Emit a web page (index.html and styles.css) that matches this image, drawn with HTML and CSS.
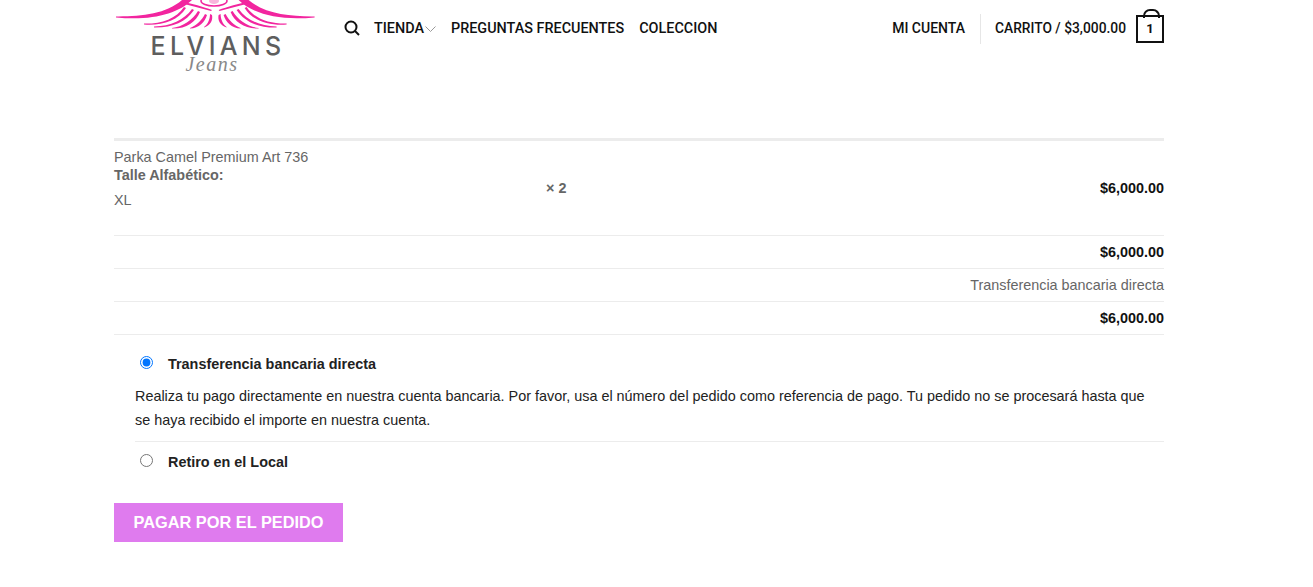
FILE: index.html
```html
<!DOCTYPE html>
<html lang="es">
  <head>
    <meta charset="UTF-8" />
    <title>Pagar pedido</title>
    <link rel="stylesheet" href="styles.css">
  </head>
  <body>
    <header class="header">
      <a class="logo" href="#">
        <svg class="wings" viewBox="0 0 200 30" width="200" height="30">
          <defs>
            <g id="wing" fill="#f2259f">
              <path d="M0 16.4C25 16.6 50 14 66 0H76C62 14 35 21 0 17.4Z" />
              <path d="M66 2C75 3 88 7 96 10L95 11C85 8 75 6 64 3Z" />
              <path d="M28 23.6C45 24 60 19 68 7L70 8C62 21 45 26 28 24.6Z" />
              <path d="M38 26.6C55 26 68 20 76 9L78 10C70 22 56 28 38 27.6Z" />
              <path d="M56 28C66 27 77 20 82 11L84 12C80 22 70 29 56 28.6Z" />
              <path d="M74 28C80 26 86 20 89 14L91 15C89 22 83 28 74 28.6Z" />
              <path d="M88 27C92 24 94 19 94 14L96 15C97 20 95 25 88 27.6Z" />
            </g>
          </defs>
          <use href="#wing" />
          <use href="#wing" transform="matrix(-1 0 0 1 198.6 0)" />
          <ellipse cx="98" cy="1" rx="13" ry="5" fill="#fff" stroke="#f2259f" stroke-width="1.5" />
          <ellipse cx="98" cy="1" rx="5" ry="3" fill="#f9b4dc" />
        </svg>
        <span class="logo-name">ELVIANS</span>
        <span class="logo-sub">Jeans</span>
      </a>
      <nav class="nav">
        <svg class="search" viewBox="0 0 16 16" width="16" height="16">
          <circle cx="7" cy="7" r="5.5" fill="none" stroke="#111" stroke-width="2" />
          <path d="M11 11l4 4" stroke="#111" stroke-width="2" />
        </svg>
        <a class="tienda" href="#">TIENDA
          <svg viewBox="0 0 11 6" width="11" height="6">
            <path d="M.5.5l5 5 5-5" fill="none" stroke="#999" />
          </svg>
        </a>
        <a href="#">PREGUNTAS FRECUENTES</a>
        <a href="#">COLECCION</a>
      </nav>
      <div class="account">
        <a class="cuenta" href="#">MI CUENTA</a>
        <a class="carrito" href="#">CARRITO / $3,000.00</a>
        <span class="bag">1</span>
      </div>
    </header>

    <main class="order">
      <div class="row item">
        <div class="item-name">
          <div>Parka Camel Premium Art 736</div>
          <strong>Talle Alfabético:</strong>
          <p>XL</p>
        </div>
        <strong class="qty">× 2</strong>
        <strong class="price">$6,000.00</strong>
      </div>
      <div class="row"><strong class="price">$6,000.00</strong></div>
      <div class="row"><span class="price">Transferencia bancaria directa</span></div>
      <div class="row"><strong class="price">$6,000.00</strong></div>

      <div class="payment">
        <label class="method first">
          <input type="radio" name="pago" checked />
          <span>Transferencia bancaria directa</span>
        </label>
        <p class="method-text">Realiza tu pago directamente en nuestra cuenta bancaria. Por favor, usa el número del pedido como referencia de pago. Tu pedido no se procesará hasta que se haya recibido el importe en nuestra cuenta.</p>
        <label class="method">
          <input type="radio" name="pago" />
          <span>Retiro en el Local</span>
        </label>
      </div>

      <button class="pay">PAGAR POR EL PEDIDO</button>
    </main>
  </body>
</html>
```

FILE: styles.css
```css
* {
  box-sizing: border-box;
  margin: 0;
  padding: 0;
}
body {
  font-family: "Liberation Sans", Arial, sans-serif;
  font-size: 14.4px;
  color: #666;
  background: #fff;
  padding: 0 149px 0 114px;
}
a {
  color: #111;
  text-decoration: none;
}

.header {
  display: flex;
  height: 138px;
  font-family: Roboto, sans-serif;
  font-size: 14.4px;
  font-weight: 500;
  color: #111;
}
.logo {
  display: flex;
  flex-direction: column;
  align-items: center;
  width: 200px;
  height: 76px;
  margin-left: 2px;
  flex: none;
}
.wings {
  display: block;
  flex: none;
}
.logo-name {
  font-family: Inter, sans-serif;
  font-size: 25px;
  line-height: 18px;
  letter-spacing: 4.3px;
  color: #5e5e5e;
  margin-top: 7px;
  margin-left: 4px;
}
.logo-sub {
  font-family: "Liberation Serif", serif;
  font-style: italic;
  font-size: 20px;
  line-height: 18px;
  letter-spacing: 1.5px;
  color: #888;
  margin-right: 8px;
}
.nav {
  display: flex;
  align-items: center;
  height: 56px;
  margin-left: 28px;
  gap: 15px;
}
.search {
  flex: none;
  margin-right: -1px;
}
.tienda {
  display: flex;
  align-items: center;
  gap: 1px;
}
.tienda svg {
  margin-top: 2px;
}
.account {
  display: flex;
  align-items: center;
  height: 56px;
  margin-left: auto;
  font-size: 14px;
}
.cuenta {
  padding-right: 15px;
  border-right: 1px solid #e6e6e6;
  height: 30px;
  line-height: 28px;
  margin-top: 2px;
}
.carrito {
  margin-left: 14px;
  font-size: 13.8px;
}
.bag {
  position: relative;
  width: 28px;
  height: 28px;
  margin-left: 10px;
  margin-top: 2px;
  border: 2px solid #111;
  text-align: center;
  line-height: 24px;
  font-size: 13px;
  font-weight: 700;
}
.bag::before {
  content: "";
  position: absolute;
  left: 5px;
  top: -8px;
  width: 13px;
  height: 7px;
  border: 2px solid #111;
  border-bottom: 0;
  border-radius: 7px 7px 0 0;
}

.order {
  border-top: 3px solid #ececec;
}
.row {
  display: flex;
  align-items: center;
  justify-content: flex-end;
  height: 33px;
  border-bottom: 1px solid #ececec;
}
.item {
  height: 95px;
  justify-content: flex-start;
  align-items: flex-start;
  padding-top: 8px;
}
.item-name {
  width: 432px;
  line-height: 16px;
}
.item-name strong {
  display: block;
  margin-top: 2px;
}
.item-name p {
  margin-top: 9px;
  line-height: 16px;
}
.qty {
  margin-top: 31px;
}
.item .price {
  margin-left: auto;
  margin-top: 31px;
}
strong.price {
  color: #111;
}

.payment {
  margin-left: 21px;
}
.method {
  display: flex;
  align-items: center;
  font-weight: 700;
  color: #222;
  height: 40px;
  padding-left: 5px;
}
.method.first {
  margin-top: 9px;
}
.method input {
  width: 13px;
  height: 13px;
  margin: -4px 15px 0 0;
  flex: none;
}
.method-text {
  line-height: 24px;
  color: #222;
  padding-right: 10px;
  padding-bottom: 9px;
  border-bottom: 1px solid #ececec;
}
.pay {
  display: block;
  width: 229px;
  height: 39px;
  margin-top: 21px;
  background: #df7bee;
  border: 0;
  color: #fff;
  font-family: "Liberation Sans", sans-serif;
  font-size: 16.35px;
  font-weight: 700;
}
```
